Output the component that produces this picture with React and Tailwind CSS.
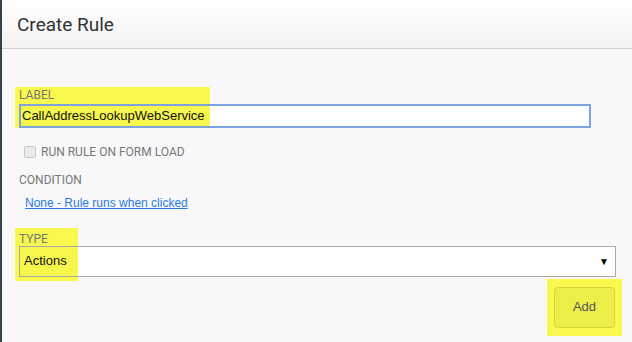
export default function App() {
  return (
    <div className="w-[632px] h-[342px] overflow-hidden flex bg-[#f8f8fa] font-['Liberation_Sans',Arial,sans-serif]">
      <div className="w-[2px] bg-[#35414b] shrink-0"></div>
      <div className="flex-1 flex flex-col">
        <div className="h-[49px] shrink-0 border-b border-[#d0d0d0] bg-gradient-to-b from-white to-[#f2f2f2] flex items-center pl-[15px] pt-[3px]">
          <h1 className="text-[19px] text-[#333] font-['Roboto',sans-serif]">Create Rule</h1>
        </div>
        <div className="flex-1 pl-[13px] pr-[15px] pt-[38px]">
          <div className="relative">
            <div className="absolute left-0 top-0 w-[195px] h-[41px] bg-[#f8f84e]"></div>
            <div className="relative pl-[4px]">
              <div className="text-[12px] text-[#777] leading-[16px] font-['Roboto',sans-serif]">LABEL</div>
              <input
                className="w-[572px] h-[24px] border-2 border-[#7fa3e0] bg-white px-[1px] text-[13px] text-[#111] outline-none"
                defaultValue="CallAddressLookupWebService"
                style={{ background: 'linear-gradient(to right, #f6f64c 0, #f6f64c 189px, #fff 189px)' }}
              />
            </div>
          </div>
          <div className="flex items-center pl-[9px] mt-[16px] h-[16px]">
            <span className="w-[12px] h-[12px] rounded-[2px] border border-[#c8c8c8] bg-[#ececec]"></span>
            <span className="ml-[5px] text-[12px] text-[#777] font-['Roboto',sans-serif]">RUN RULE ON FORM LOAD</span>
          </div>
          <div className="pl-[4px] mt-[11px] text-[12px] text-[#777] font-['Roboto',sans-serif]">CONDITION</div>
          <div className="pl-[10px] mt-[5px] text-[12px] text-[#2a7ae2] underline">None - Rule runs when clicked</div>
          <div className="relative mt-[16px]">
            <div className="absolute left-0 top-0 w-[63px] h-[53px] bg-[#f8f84e]"></div>
            <div className="relative pl-[4px] pt-[4px]">
              <div className="text-[12px] text-[#777] leading-[14px] font-['Roboto',sans-serif]">TYPE</div>
              <div
                className="w-[597px] h-[31px] border border-[#a9a9a9] flex items-center justify-between pl-[4px] pr-[6px]"
                style={{ background: 'linear-gradient(to right, #f6f64c 0, #f6f64c 58px, #fff 58px)' }}
              >
                <span className="text-[13px] text-[#111]">Actions</span>
                <span className="text-[10px] text-black">▼</span>
              </div>
            </div>
          </div>
          <div className="flex justify-end mt-[2px] mr-[-5px]">
            <div className="w-[75px] h-[57px] bg-[#f8f84e] flex items-center justify-center">
              <button className="w-[61px] h-[41px] rounded-[4px] border border-[#d6d63a] bg-[#eeee48] text-[13px] text-[#555]">Add</button>
            </div>
          </div>
        </div>
      </div>
    </div>
  )
}
